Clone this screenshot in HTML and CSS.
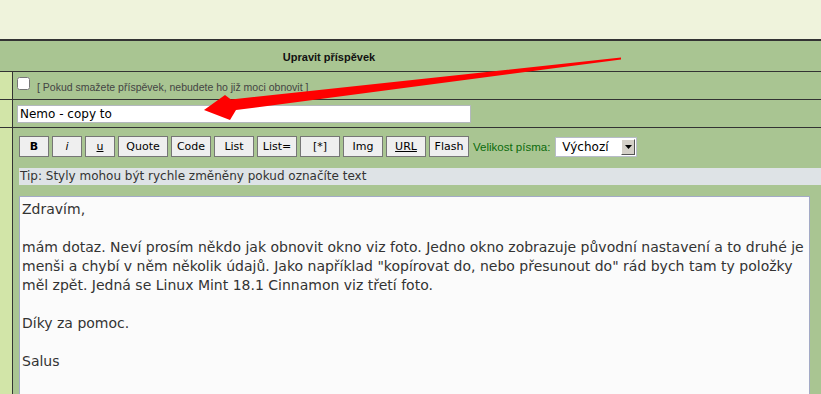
FILE: index.html
```html
<!DOCTYPE html>
<html>
<head>
  <title>Upravit příspěvek</title>
  <link rel="stylesheet" href="styles.css">
</head>
<body>
  <div class="top"></div>
  <div class="panel">
    <div class="panel-head"><span class="panel-title">Upravit příspěvek</span></div>

    <div class="row row-delete">
      <div class="side"></div>
      <div class="cell cell-delete">
        <input type="checkbox" id="delete">
        <label for="delete" class="note">[ Pokud smažete příspěvek, nebudete ho již moci obnovit ]</label>
      </div>
    </div>

    <div class="row row-subject">
      <div class="side"></div>
      <div class="cell">
        <input type="text" class="subject" value="Nemo - copy to">
      </div>
    </div>

    <div class="row row-body">
      <div class="side"></div>
      <div class="cell">
        <div class="toolbar">
          <button class="btn btn-small"><b>B</b></button>
          <button class="btn btn-small"><i>i</i></button>
          <button class="btn btn-small"><u>u</u></button>
          <button class="btn btn-wide">Quote</button>
          <button class="btn">Code</button>
          <button class="btn">List</button>
          <button class="btn">List=</button>
          <button class="btn">[*]</button>
          <button class="btn">Img</button>
          <button class="btn"><u>URL</u></button>
          <button class="btn">Flash</button>
          <span class="size-label">Velikost písma:</span>
          <span class="select">
            <span class="select-value">Výchozí</span>
            <span class="select-btn">
              <svg width="7" height="4" viewBox="0 0 7 4"><polygon points="0,0 7,0 3.5,4" fill="#000"/></svg>
            </span>
          </span>
        </div>
        <div class="tip">Tip: Styly mohou být rychle změněny pokud označíte text</div>
        <div class="editor">Zdravím,

mám dotaz. Neví prosím někdo jak obnovit okno viz foto. Jedno okno zobrazuje původní nastavení a to druhé je
menši a chybí v něm několik údajů. Jako například "kopírovat do, nebo přesunout do" rád bych tam ty položky
měl zpět. Jedná se Linux Mint 18.1 Cinnamon viz třetí foto.

Díky za pomoc.

Salus</div>
      </div>
    </div>
  </div>

  <!-- sipka pres obrazek -->
  <svg class="arrow" width="821" height="394" viewBox="0 0 821 394">
    <polygon points="204,110 225,95 231,99.5 621,57.5 621,59.5 236,110 230,120" fill="#ff0000"/>
  </svg>
</body>
</html>
```

FILE: styles.css
```css
html, body {
  height: 100%;
}

body {
  margin: 0;
  display: flex;
  flex-direction: column;
  overflow: hidden;
  background-color: #eff3dc;
  font-family: "Liberation Sans", Arial, sans-serif;
}

.top {
  height: 39px;
  flex: none;
}

.panel {
  flex: 1;
  min-height: 0;
  display: flex;
  flex-direction: column;
  overflow: hidden;
  background-color: #a9c592;
  border-top: 2px solid #333;
}

.panel-head {
  height: 30px;
  line-height: 30px;
  padding-right: 163px;
  text-align: center;
  border-bottom: 1px solid #333;
}

.panel-title {
  font-size: 11px;
  font-weight: bold;
  color: #111;
}

.row {
  display: grid;
  grid-template-columns: 13px 1fr;
  border-bottom: 1px solid #333;
}

.side {
  background-color: #d2e5a8;
  border-right: 1px solid #333;
}

.row-delete .cell {
  height: 27px;
  display: flex;
  align-items: flex-start;
}

.row-delete input[type="checkbox"] {
  margin: 5px 7px 0 4px;
  width: 13px;
  height: 13px;
}

.note {
  font-size: 10.5px;
  line-height: 13px;
  margin-top: 9px;
  color: #444;
}

.row-subject .cell {
  height: 27px;
}

.subject {
  box-sizing: border-box;
  width: 454px;
  height: 18px;
  margin: 5px 0 0 4px;
  padding: 0 2px;
  border: 1px solid #b3b8bd;
  background-color: #fff;
  font-family: "DejaVu Sans", Verdana, sans-serif;
  font-size: 12px;
  color: #000;
  outline: none;
}

.row-body {
  flex: 1;
  min-height: 0;
  border-bottom: none;
}

.toolbar {
  display: flex;
  align-items: center;
  gap: 3px;
  padding: 8px 0 0 6px;
}

.btn {
  box-sizing: border-box;
  width: 40px;
  height: 21px;
  padding: 0;
  border: 1px solid #767676;
  border-radius: 0;
  background-color: #efefef;
  font-family: "DejaVu Sans", Verdana, sans-serif;
  font-size: 11px;
  color: #000;
}

.btn-small {
  width: 30px;
}

.btn-wide {
  width: 50px;
}

.size-label {
  margin: 0 1px;
  font-size: 11.5px;
  color: #0b6a0b;
}

.select {
  box-sizing: border-box;
  display: inline-flex;
  align-items: center;
  width: 82px;
  height: 20px;
  margin-left: 1px;
  border: 1px solid #b7bcc8;
  background-color: #fff;
}

.select-value {
  flex: 1;
  padding-left: 6px;
  font-family: "DejaVu Sans", Verdana, sans-serif;
  font-size: 12px;
  color: #000;
}

.select-btn {
  box-sizing: border-box;
  width: 14px;
  height: 16px;
  margin-right: 1px;
  display: flex;
  align-items: center;
  justify-content: center;
  background-color: #d4d0c8;
  border: 1px solid;
  border-color: #fff #555 #555 #fff;
}

.tip {
  margin: 11px 0 0 6px;
  padding-left: 1px;
  height: 17px;
  line-height: 17px;
  background-color: #dee3e6;
  font-family: "DejaVu Sans", Verdana, sans-serif;
  font-size: 12px;
  color: #333;
}

.editor {
  box-sizing: border-box;
  width: 791px;
  height: 220px;
  margin: 11px 0 0 6px;
  padding: 3px 2px;
  border: 1px solid #a3aac6;
  background-color: #fbfbfb;
  font-family: "DejaVu Sans", Verdana, sans-serif;
  font-size: 14px;
  line-height: 19px;
  color: #333;
  white-space: pre;
  overflow: hidden;
}

.arrow {
  position: absolute;
  top: 0;
  left: 0;
  pointer-events: none;
}
```
